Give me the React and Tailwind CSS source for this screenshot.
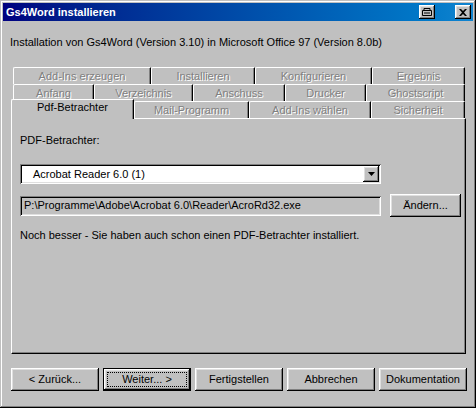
import React from "react";

// klassische Win-Bevels
const raised =
  "shadow-[inset_-1px_-1px_#000,inset_1px_1px_#fff,inset_-2px_-2px_#808080,inset_2px_2px_#dfdfdf]";
const sunken =
  "shadow-[inset_1px_1px_#808080,inset_-1px_-1px_#fff,inset_2px_2px_#000,inset_-2px_-2px_#dfdfdf]";

const disabledText = "text-[#808080] [text-shadow:1px_1px_0_#fff]";

function Tab({ width, label, selected }) {
  if (selected) {
    return (
      <div
        className={`${width} relative z-10 -mb-[1px] h-[20px] bg-[#c0c0c0] border-t border-l border-white rounded-tl-[2px] border-r border-r-black shadow-[inset_-1px_0_#808080] flex justify-center pt-[1px] leading-[13px]`}
      >
        {label}
      </div>
    );
  }
  return (
    <div
      className={`${width} h-full border-t border-l border-white rounded-tl-[2px] rounded-tr-[1px] border-r border-r-black shadow-[inset_-1px_0_#808080] flex justify-center pt-[2px] leading-[13px] ${disabledText}`}
    >
      {label}
    </div>
  );
}

function Button({ children, isDefault, className = "" }) {
  if (isDefault) {
    return (
      <div className={`h-[23px] shrink-0 border border-black bg-[#c0c0c0] ${className}`}>
        <div className={`h-full ${raised} p-[3px]`}>
          <div className="h-full border border-dotted border-black flex items-center justify-center leading-[13px]">
            {children}
          </div>
        </div>
      </div>
    );
  }
  return (
    <div
      className={`h-[23px] shrink-0 bg-[#c0c0c0] ${raised} flex items-center justify-center leading-[13px] ${className}`}
    >
      {children}
    </div>
  );
}

function TitleBar() {
  return (
    <div className="h-[18px] bg-gradient-to-r from-[#000080] to-[#1084d0] flex items-center pl-[3px] pr-[2px]">
      <span className="text-white font-bold text-[11px] leading-[13px] flex-1">
        Gs4Word installieren
      </span>
      <div className={`w-[16px] h-[14px] bg-[#c0c0c0] ${raised} flex items-center justify-center`}>
        <svg width="10" height="8" viewBox="0 0 10 8">
          <path d="M2 0.5h6v2H2z" fill="none" stroke="#000" />
          <path d="M0.5 2.5h9v5h-9z" fill="none" stroke="#000" />
          <path d="M2 5h6" stroke="#000" />
        </svg>
      </div>
      <div className={`ml-[20px] w-[16px] h-[14px] bg-[#c0c0c0] ${raised} flex items-center justify-center`}>
        <svg width="8" height="7" viewBox="0 0 8 7">
          <path
            d="M0 0h2l2 2 2-2h2L5 3.5 8 7H6L4 5 2 7H0l3-3.5z"
            fill="#000"
          />
        </svg>
      </div>
    </div>
  );
}

export default function App() {
  return (
    <div className="w-[476px] h-[408px] bg-[#c0c0c0] p-[3px] flex flex-col shadow-[inset_-1px_-1px_#000,inset_1px_1px_#c0c0c0,inset_-2px_-2px_#808080,inset_2px_2px_#fff] font-['Liberation_Sans',Arial,sans-serif] text-[11px] text-black">
      <TitleBar />

      <div className="pl-[7px] mt-[15px] leading-[13px]">
        Installation von Gs4Word (Version 3.10) in Microsoft Office 97 (Version 8.0b)
      </div>

      {/* Registerkarten */}
      <div className="ml-[8px] mt-[18px] w-[455px] flex flex-col">
        <div className="h-[17px] pl-[2px] flex">
          <Tab width="w-[138px]" label="Add-Ins erzeugen" />
          <Tab width="w-[104px]" label="Installieren" />
          <Tab width="w-[117px]" label="Konfigurieren" />
          <Tab width="w-[93px]" label="Ergebnis" />
        </div>
        <div className="h-[17px] pl-[2px] flex">
          <Tab width="w-[81px]" label="Anfang" />
          <Tab width="w-[99px]" label="Verzeichnis" />
          <Tab width="w-[92px]" label="Anschuss" />
          <Tab width="w-[81px]" label="Drucker" />
          <Tab width="w-[99px]" label="Ghostscript" />
        </div>
        <div className="h-[17px] -mt-[2px] box-content pt-[2px] flex items-end">
          <Tab width="w-[123px]" label="Pdf-Betrachter" selected />
          <div className="h-[17px] flex">
            <Tab width="w-[115px]" label="Mail-Programm" />
            <Tab width="w-[122px]" label="Add-Ins wählen" />
            <Tab width="w-[94px]" label="Sicherheit" />
          </div>
        </div>

        {/* Seite */}
        <div className="h-[236px] border-t border-l border-white border-r border-b border-r-black border-b-black shadow-[inset_-1px_-1px_#808080] pl-[8px] pr-[2px] pt-[15px] flex flex-col leading-[13px]">
          <div>PDF-Betrachter:</div>

          <div className={`mt-[17px] w-[361px] h-[20px] bg-white ${sunken} flex items-center p-[2px]`}>
            <span className="flex-1 pl-[11px]">Acrobat Reader 6.0 (1)</span>
            <div className={`w-[16px] h-[16px] bg-[#c0c0c0] ${raised} flex items-center justify-center`}>
              <svg width="7" height="4" viewBox="0 0 7 4">
                <path d="M0 0h7L3.5 4z" fill="#000" />
              </svg>
            </div>
          </div>

          <div className="mt-[10px] flex items-center">
            <div className={`w-[361px] shrink-0 h-[20px] ${sunken} flex items-center pl-[4px]`}>
              P:\Programme\Adobe\Acrobat 6.0\Reader\AcroRd32.exe
            </div>
            <Button className="ml-[9px] w-[71px]">Ändern...</Button>
          </div>

          <div className="mt-[12px]">
            Noch besser - Sie haben auch schon einen PDF-Betrachter installiert.
          </div>
        </div>
      </div>

      {/* Schaltflächen */}
      <div className="ml-[8px] mt-[14px] flex gap-[4px]">
        <Button className="w-[88px]">&lt; Zurück...</Button>
        <Button className="w-[88px]" isDefault>
          Weiter... &gt;
        </Button>
        <Button className="w-[88px]">Fertigstellen</Button>
        <Button className="w-[88px]">Abbrechen</Button>
        <Button className="w-[88px]">Dokumentation</Button>
      </div>
    </div>
  );
}
